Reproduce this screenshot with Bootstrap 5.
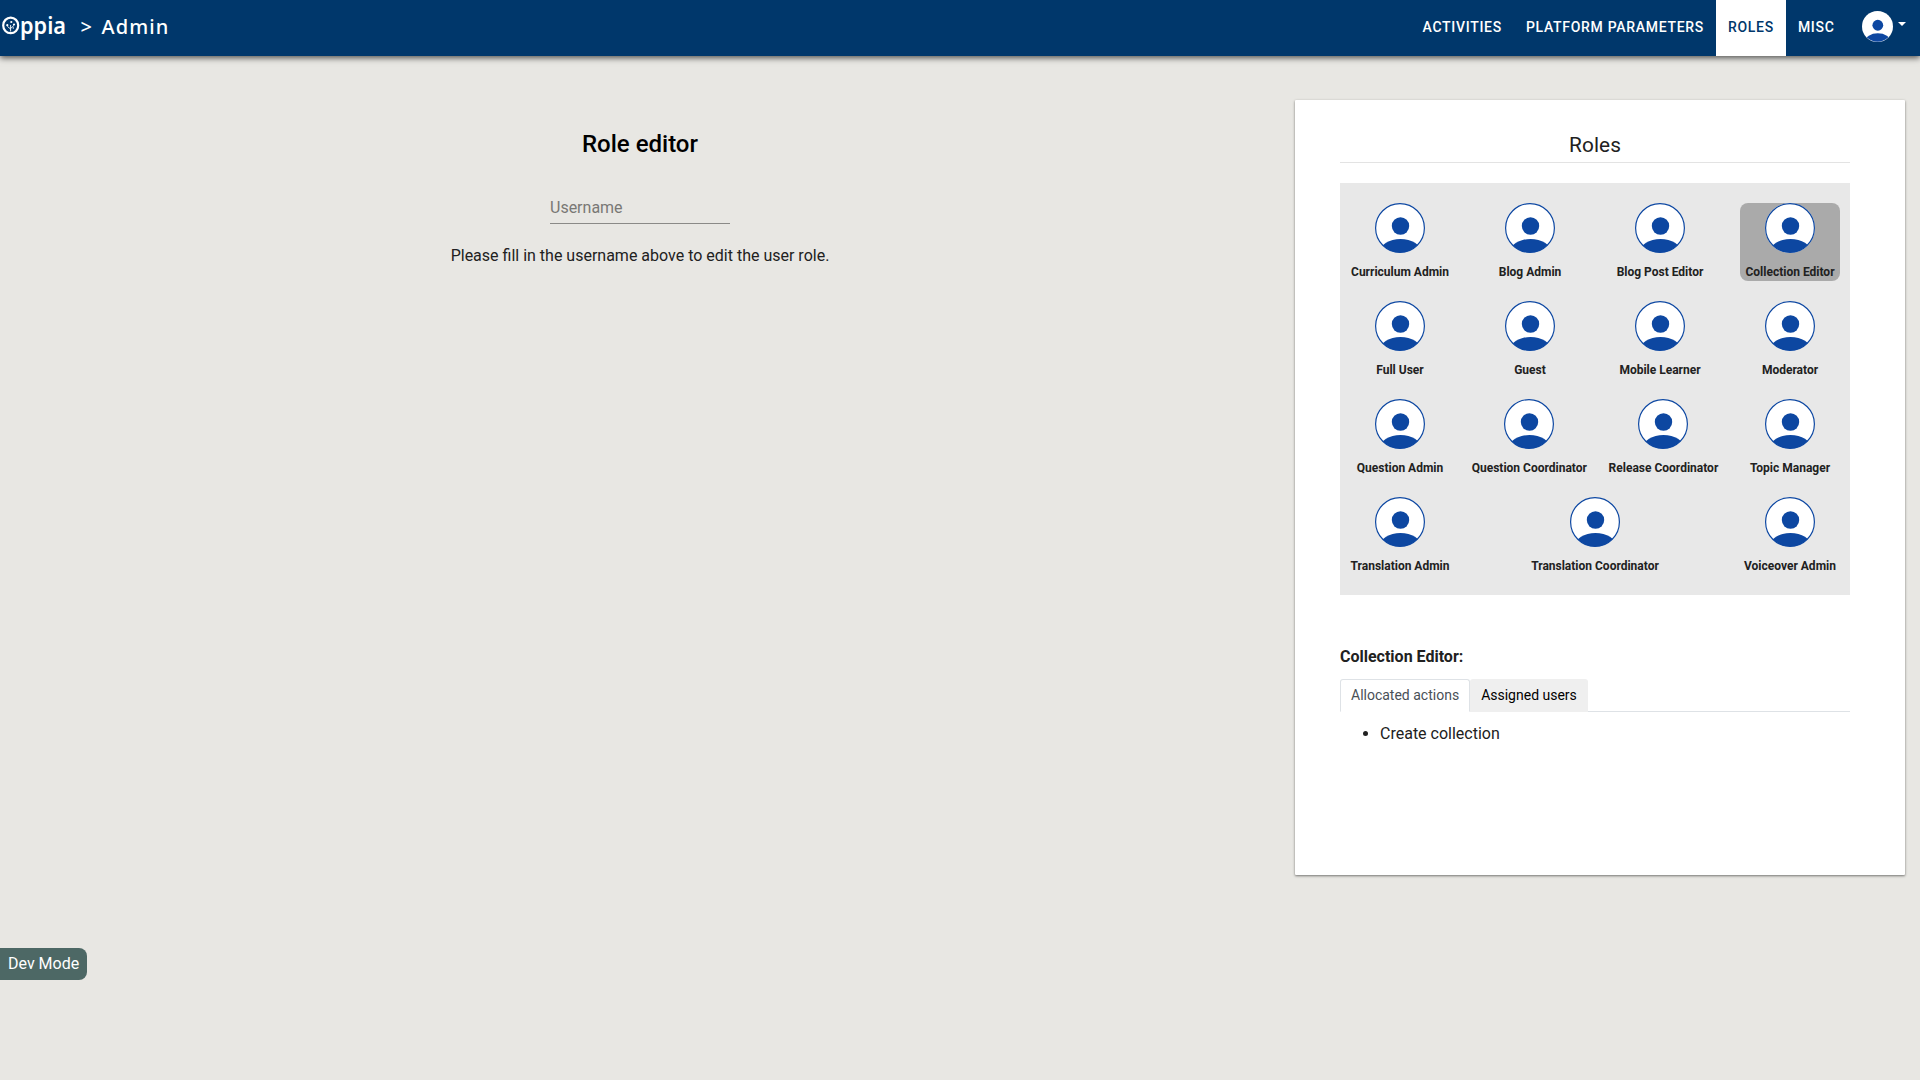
<!DOCTYPE html>
<html lang="en">
<head>
<meta charset="utf-8">
<title>Admin | Oppia</title>
<link href="https://cdn.jsdelivr.net/npm/bootstrap@5.3.0/dist/css/bootstrap.min.css" rel="stylesheet">
<style>
body{font-family:Roboto,"Liberation Sans",sans-serif;background:#e8e7e3;color:#212121;height:1080px;overflow:hidden}
.top-bar{height:56px;background:#00376b;box-shadow:0 2px 6px rgba(0,0,0,.65);position:relative}
.crumb{font-family:"Noto Sans",sans-serif;font-size:20px;line-height:28px;font-weight:500}
.crumb span{padding-top:13px}
.crumb-page{letter-spacing:1.1px;margin-left:9.5px}
.top-tab{font-size:14px;font-weight:500;letter-spacing:.7px;line-height:54px;height:56px;padding:0 12px;color:#fff;text-decoration:none;white-space:nowrap}
.top-tab.active{background:#fff;color:#00376b}
.account{padding:11px 14px 0 15.5px;gap:5px}
.caret-down{border:4px solid transparent;border-top-color:#fff;border-bottom:0;height:4px;margin-top:11px}
.editor-pane{width:1280px;padding-top:73px}
.editor-pane h2{font-size:24px;font-weight:500;line-height:30px;color:#000}
.name-field{width:180px;height:34px;border:0;border-bottom:1px solid #8a8a87;background:transparent;padding:1px 0 0;font-size:16px;margin-top:31px;border-radius:0}
.name-field::placeholder{color:#797875;opacity:1}
.hint{margin-top:20px;line-height:24px}
.roles-card{width:610px;height:775px;margin-top:44px;margin-left:15px;padding:32px 55px 0 45px;border:0;border-radius:1px;box-shadow:0 1px 3px rgba(0,0,0,.35),0 1px 2px rgba(0,0,0,.2)}
.roles-title{font-size:20.8px;line-height:26px;padding-bottom:4px;border-bottom:1px solid #e3e3e3;margin-bottom:20px;letter-spacing:.1px}
.role-board{background:#e8e8e8;padding:20px 0 0;height:412px;align-content:flex-start}
.role-item{min-width:100px;height:78px;margin:0 10px 20px;border-radius:8px;font-size:12px;font-weight:700;line-height:18px;white-space:nowrap}
.role-item svg{display:block;margin:0 auto 10px}
.role-item.chosen{background:#aaa}
.role-name{font-size:16px;font-weight:700;line-height:24px;margin-top:50px;margin-bottom:10px}
.detail-tabs{font-size:14px}
.detail-tabs .nav-link{padding:0 10px;line-height:31px;height:33px;border-radius:3px 3px 0 0;color:#000;background:#efefef}
.detail-tabs .nav-link.active{color:#495057;background:#fff}
.action-list{margin-top:10px;padding-left:40px}
.dev-tag{position:fixed;left:0;top:948px;width:87px;height:32px;line-height:32px;padding-left:8px;background:#4d6865;color:#fff;border-radius:0 8px 8px 0}
</style>
<script src="https://cdn.jsdelivr.net/npm/bootstrap@5.3.0/dist/js/bootstrap.bundle.min.js"></script>
</head>
<body>
<svg width="0" height="0" class="position-absolute">
  <defs>
    <clipPath id="disc"><circle cx="25" cy="25" r="24.5"/></clipPath>
    <symbol id="person" viewBox="0 0 50 50">
      <circle cx="25" cy="25" r="25" fill="#fff"/>
      <circle cx="25.5" cy="23" r="8.7" fill="#0d47a1"/>
      <ellipse cx="25.5" cy="49" rx="20.5" ry="13" fill="#0d47a1" clip-path="url(#disc)"/>
    </symbol>
  </defs>
</svg>
<nav class="top-bar d-flex justify-content-between text-white">
  <div class="d-flex crumb">
    <svg width="80.5" height="56" viewBox="0 0 80.5 56" role="img" aria-label="Oppia">
      <ellipse cx="10.7" cy="25.4" rx="7.5" ry="7.8" fill="none" stroke="#fff" stroke-width="2.2"/>
      <path d="M10.6 31.5V25M10.6 29L7.4 26.4M10.6 28.5L14 25.4" fill="none" stroke="#fff" stroke-width=".9"/>
      <g fill="#fff"><circle cx="11.3" cy="22" r="1.1"/><circle cx="7.3" cy="25.2" r="1.1"/><circle cx="14" cy="24.5" r="1.1"/><circle cx="13.3" cy="28" r=".7"/></g>
      <text x="20" y="34" fill="#fff" font-size="23" font-weight="600" textLength="46" lengthAdjust="spacingAndGlyphs">ppia</text>
    </svg>
    <span>&gt;</span>
    <span class="crumb-page">Admin</span>
  </div>
  <div class="d-flex">
    <a class="top-tab" href="#">ACTIVITIES</a>
    <a class="top-tab" href="#">PLATFORM PARAMETERS</a>
    <a class="top-tab active" href="#">ROLES</a>
    <a class="top-tab" href="#">MISC</a>
    <div class="d-flex align-items-start account">
      <svg width="31" height="31"><use href="#person"/></svg>
      <span class="caret-down"></span>
    </div>
  </div>
</nav>
<main class="d-flex align-items-start">
  <section class="editor-pane d-flex flex-column align-items-center">
    <h2 class="m-0">Role editor</h2>
    <input class="name-field" placeholder="Username">
    <p class="hint mb-0">Please fill in the username above to edit the user role.</p>
  </section>
  <section class="card roles-card">
    <div class="roles-title text-center">Roles</div>
    <div class="role-board d-flex flex-wrap justify-content-between text-center" id="board"></div>
    <div class="role-name">Collection Editor:</div>
    <ul class="nav nav-tabs detail-tabs">
      <li class="nav-item"><a class="nav-link active" href="#">Allocated actions</a></li>
      <li class="nav-item"><a class="nav-link" href="#">Assigned users</a></li>
    </ul>
    <ul class="action-list"><li>Create collection</li></ul>
  </section>
</main>
<div class="dev-tag">Dev Mode</div>
<script>
const roles=['Curriculum Admin','Blog Admin','Blog Post Editor','Collection Editor','Full User','Guest','Mobile Learner','Moderator','Question Admin','Question Coordinator','Release Coordinator','Topic Manager','Translation Admin','Translation Coordinator','Voiceover Admin'];
document.getElementById('board').innerHTML=roles.map(r=>`<div class="role-item${r==='Collection Editor'?' chosen':''}"><svg width="50" height="50"><use href="#person"/><circle cx="25" cy="25" r="24.4" fill="none" stroke="#0d47a1" stroke-width="1.2"/></svg>${r}</div>`).join('');
</script>
</body>
</html>
